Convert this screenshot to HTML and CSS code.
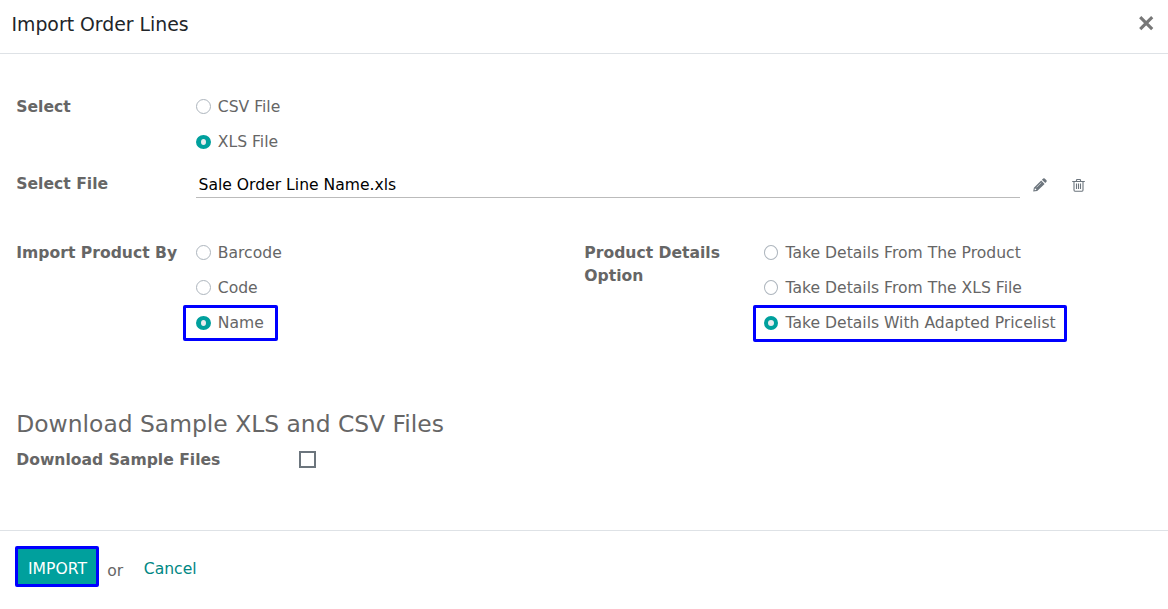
FILE: index.html
```html
<!DOCTYPE html>
<html lang="en">
<head>
<meta charset="utf-8">
<title>Import Order Lines</title>
<link rel="stylesheet" href="styles.css">
</head>
<body>
<div class="dialog">
  <header class="dialog-header">
    <h1 class="dialog-title">Import Order Lines</h1>
    <button class="close" aria-label="Close"><svg width="16" height="16" viewBox="0 0 16 16"><path d="M2.2 2.2 14.2 14.2M14.2 2.2 2.2 14.2"/></svg></button>
  </header>
  <main class="dialog-body">
    <section class="group">
      <div class="label">Select</div>
      <div class="options">
        <label class="option"><span class="radio"></span>CSV File</label>
        <label class="option"><span class="radio checked"></span>XLS File</label>
      </div>
    </section>
    <section class="group file-group">
      <div class="label file-label">Select File</div>
      <div class="file-name">Sale Order Line Name.xls</div>
      <button class="icon-btn edit" aria-label="Edit"><svg width="14" height="14" viewBox="0 0 14 14"><path fill-rule="evenodd" d="M.2 13.6.9 9.8 8.2 2.5 11.6 5.9 4.2 13ZM1.8 10.6 1.5 12.3 3.2 12.1 3.2 10.8ZM8.2 4.5 3.4 9.3 3.7 9.6 8.5 4.8ZM8.9 1.8 10.2.5Q11 0 11.7.5L13.5 2.3Q14 3 13.5 3.8L12.3 5.1Z"/></svg></button>
      <button class="icon-btn trash" aria-label="Clear"><svg width="13" height="14" viewBox="0 0 13 14"><path d="M.2 3.5H12.8M4.2 3.4 4.8 1.5H8.2L8.8 3.4M2 3.5V12.1Q2 13.3 3 13.3H10Q11 13.3 11 12.1V3.5M4.5 5.6V11M6.5 5.6V11M8.5 5.6V11"/></svg></button>
    </section>
    <div class="columns">
      <section class="group">
        <div class="label">Import Product By</div>
        <div class="options">
          <label class="option"><span class="radio"></span>Barcode</label>
          <label class="option"><span class="radio"></span>Code</label>
          <label class="option marked mark-name"><span class="radio checked"></span>Name</label>
        </div>
      </section>
      <section class="group">
        <div class="label">Product Details<br>Option</div>
        <div class="options details">
          <label class="option"><span class="radio"></span>Take Details From The Product</label>
          <label class="option"><span class="radio"></span>Take Details From The XLS File</label>
          <label class="option marked mark-price"><span class="radio checked"></span>Take Details With Adapted Pricelist</label>
        </div>
      </section>
    </div>
    <h2 class="section-title">Download Sample XLS and CSV Files</h2>
    <div class="sample-row">
      <div class="sample-label">Download Sample Files</div>
      <span class="checkbox"></span>
    </div>
  </main>
  <footer class="dialog-footer">
    <button class="import">IMPORT</button>
    <span class="or">or</span>
    <a class="cancel">Cancel</a>
  </footer>
</div>
</body>
</html>
```
FILE: styles.css
```css
*, *::after { box-sizing: border-box; }
body {
  margin: 0;
  background: #fff;
  color: #666;
  font: 15.6px/23px "DejaVu Sans", sans-serif;
  white-space: nowrap;
}
button { padding: 0; border: 0; background: none; font: inherit; }
svg { display: block; }
.dialog { height: 609px; display: flex; flex-direction: column; }
.dialog-header {
  height: 54px;
  padding: 0 14px 5px 11.5px;
  border-bottom: 1px solid #dee2e6;
  display: flex;
  align-items: center;
  justify-content: space-between;
}
.dialog-title { margin: 0; padding-top: 1px; color: #212529; font-size: 18.85px; font-weight: 400; }
.close { margin-top: -3px; }
.close path { fill: none; stroke: #777; stroke-width: 3.1; }
.dialog-body { height: 476px; padding: 35px 0 0 16px; }
.group { display: grid; grid-template-columns: 180px 1fr; }
.label, .sample-label { padding-left: .3px; font-weight: 700; }
.label { padding-top: 7px; }
.option { height: 35px; padding-top: 2px; display: flex; align-items: center; gap: 7px; position: relative; }
.radio {
  width: 15px;
  height: 15px;
  margin-top: -2px;
  border: 1px solid #adb5bd;
  border-radius: 50%;
}
.radio.checked { height: 14px; margin-top: -1px; border: 4.5px solid #00a09d; border-width: 4px 5px; background: #e9ecef; }
.options .option { gap: 6.8px; }
.details .option { gap: 7.5px; }
.details .radio { width: 14px; }
.details .radio.checked { border-width: 4px; }
.file-group { grid-template-columns: 180px 824px 39px 39px; padding-top: 13px; height: 76px; align-items: start; }
.file-label { padding-top: 1px; }
.file-name { height: 26px; padding: 2px 0 0 2.5px; border-bottom: 1px solid #bbb; color: #000; }
.icon-btn { margin: 6px 0 0 13px; fill: #6c757d; }
.trash path { fill: none; stroke: #6c757d; stroke-width: 1.1; }
.columns { display: grid; grid-template-columns: 568px 584px; }
.marked::after { content: ""; position: absolute; border: 3px solid #00f; border-radius: 2px; }
.mark-name::after { left: -13.5px; top: 0; width: 95px; height: 36px; }
.options.details .option { gap: 7.5px; }
.mark-price::after { left: -11px; top: 0; width: 314px; height: 37px; }
.section-title { margin: 69px 0 0; padding-left: .3px; font-size: 23.4px; line-height: 30px; font-weight: 400; }
.sample-row { display: flex; align-items: center; padding-top: 10px; }
.sample-label { width: 283px; }
.checkbox { width: 17px; height: 17px; margin-top: -2px; border: 2px solid #6c757d; }
.dialog-footer {
  height: 79px;
  padding: 15px;
  border-top: 1px solid #dee2e6;
  display: flex;
  align-items: flex-start;
}
.import { width: 84px; height: 41px; padding: 6px 0 0 1px; border: 3px solid #00f; border-radius: 2px; background: #00a09d; color: #fff; }
.or { margin: 14px 0 0 8.3px; }
.cancel { margin: 12px 0 0 20.5px; color: #008784; }
```
